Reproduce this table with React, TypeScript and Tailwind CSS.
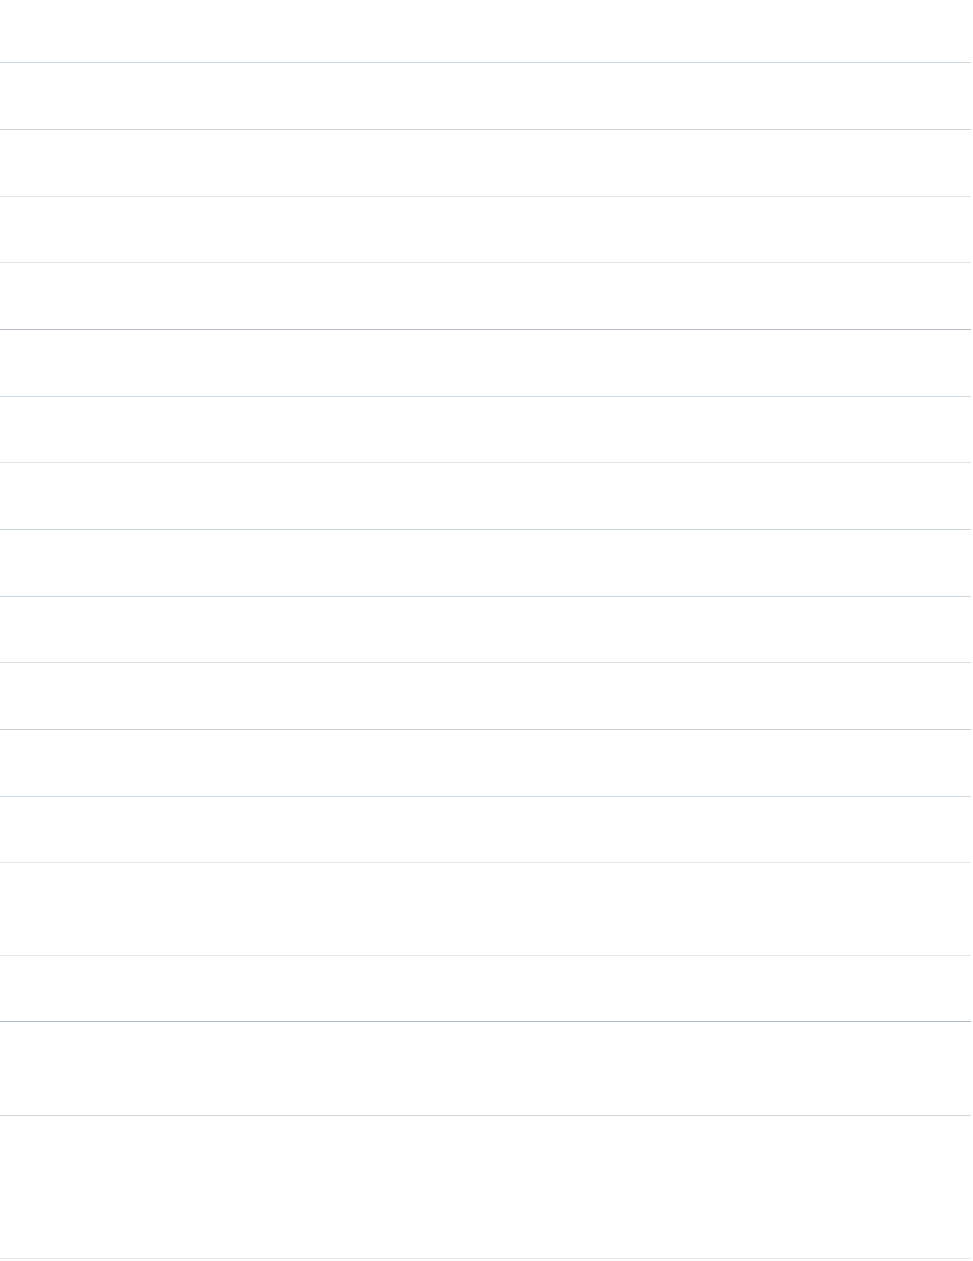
const rows = [
  { h: "h-[63px]", line: "border-[#cdd8e0]" },
  { h: "h-[67px]", line: "border-[#cfd4d8]" },
  { h: "h-[67px]", line: "border-[#e1e5e8]" },
  { h: "h-[66px]", line: "border-[#e1e5e8]" },
  { h: "h-[67px]", line: "border-[#b6bfc8]" },
  { h: "h-[67px]", line: "border-[#cfd9e1]" },
  { h: "h-[66px]", line: "border-[#e0e4e7]" },
  { h: "h-[67px]", line: "border-[#cbd6dd]" },
  { h: "h-[67px]", line: "border-[#cbd7df]" },
  { h: "h-[66px]", line: "border-[#d6dfe4]" },
  { h: "h-[67px]", line: "border-[#c8d0d5]" },
  { h: "h-[67px]", line: "border-[#cdd8e0]" },
  { h: "h-[66px]", line: "border-[#e5e8e9]" },
  { h: "h-[93px]", line: "border-[#e5e8e9]" },
  { h: "h-[66px]", line: "border-[#adbec8]" },
  { h: "h-[94px]", line: "border-[#cdd5db]" },
  { h: "h-[143px]", line: "border-[#e6e7e8]" },
];

export default function App() {
  return (
    <div className="min-h-screen bg-white font-['Liberation_Sans',sans-serif]">
      <div className="flex w-[971px] flex-col">
        {rows.map((row, i) => (
          <div key={i} className={`${row.h} border-b ${row.line}`} />
        ))}
      </div>
    </div>
  );
}
